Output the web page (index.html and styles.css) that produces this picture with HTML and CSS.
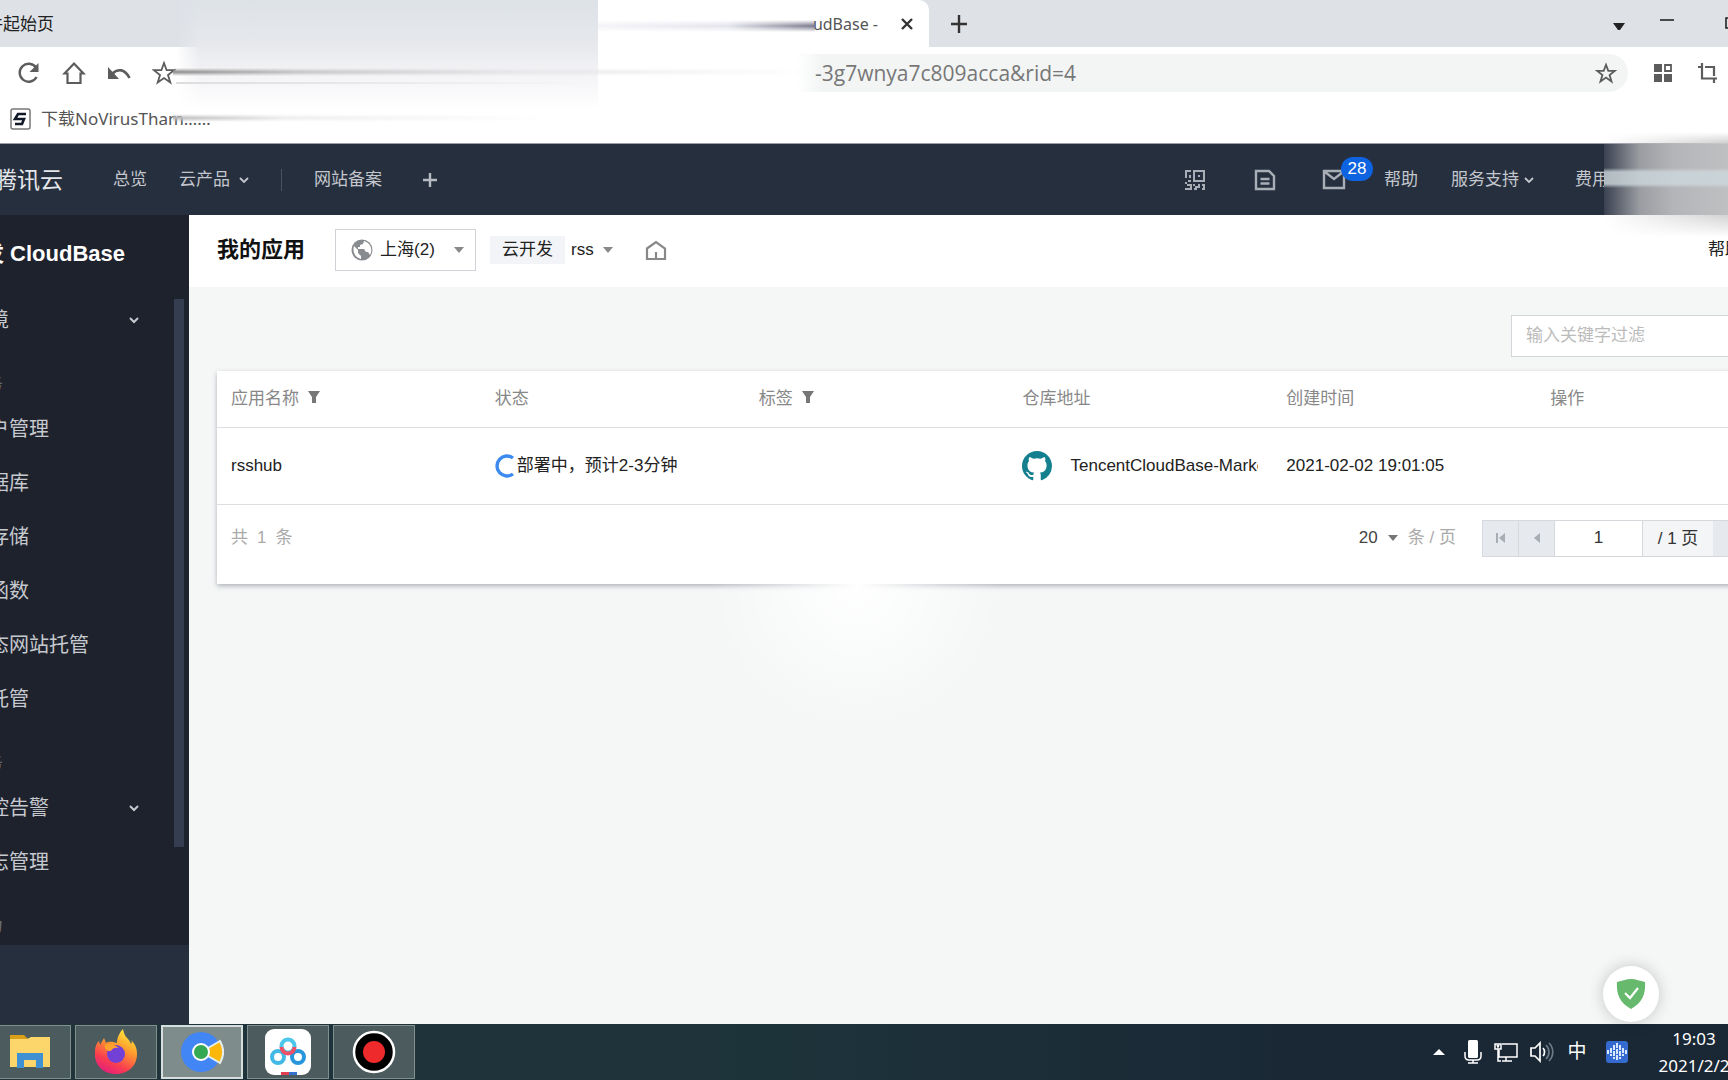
FILE: index.html
```html
<!DOCTYPE html>
<html lang="zh-CN">
<head>
<meta charset="utf-8">
<title>我的应用 - CloudBase</title>
<link rel="stylesheet" href="styles.css">
</head>
<body>
<div class="screen">
  <div class="tabstrip">
    <div class="tab">软件起始页</div>
    <div class="tab tab-active">
      <span>udBase -</span>
      <button class="plain" aria-label="关闭标签页"><svg width="16" height="16" viewBox="0 0 16 16"><path d="M3 3l10 10M13 3L3 13" stroke="#333" stroke-width="2.4"/></svg></button>
    </div>
    <button class="plain new-tab" aria-label="新标签页"><svg width="18" height="20" viewBox="0 0 18 20"><path d="M9 1v18M1 10h16" stroke="#333" stroke-width="2.4"/></svg></button>
    <div class="window-buttons">
      <button class="plain" aria-label="标签列表"><svg width="14" height="20" viewBox="0 0 14 20"><path d="M1 9h12l-5 7H6z" fill="#222"/></svg></button>
      <button class="plain" aria-label="最小化"><svg width="16" height="20" viewBox="0 0 16 20"><path d="M1 6h14" stroke="#222" stroke-width="1.6"/></svg></button>
      <button class="plain restore" aria-label="还原"><svg width="16" height="20" viewBox="0 0 16 20"><path d="M1 4h10v10H1zM4 4V1h10v10h-3" fill="none" stroke="#222" stroke-width="1.6"/></svg></button>
    </div>
  </div>

  <div class="toolbar">
    <div class="tool-icons">
      <button class="plain" aria-label="刷新"><svg width="24" height="24" viewBox="0 0 24 24"><path d="M19.6 16A9 9 0 1 1 19 6.500" fill="none" stroke="#5c5c5c" stroke-width="2.4"/><path d="M21.500 2v9h-9z" fill="#5c5c5c"/></svg></button>
      <button class="plain" aria-label="主页"><svg width="24" height="24" viewBox="0 0 24 24"><path d="M2.500 12.500L12 2.500l9.500 10H18.500v9.500h-13v-9.500z" fill="none" stroke="#5c5c5c" stroke-width="2.2"/></svg></button>
      <button class="plain" aria-label="撤销"><svg width="24" height="24" viewBox="0 0 24 24"><path d="M5 13C11 7 18 8 22.500 17" fill="none" stroke="#5c5c5c" stroke-width="2.6"/><path d="M1 6v12h11z" fill="#5c5c5c"/></svg></button>
      <button class="plain" aria-label="收藏夹"><svg width="24" height="24" viewBox="0 0 24 24"><path d="M12 2l2.600 7.200h7.400l-6 4.800 2.300 7.500L12 17l-6.300 4.500L8 14 2 9.200h7.400z" fill="none" stroke="#5c5c5c" stroke-width="1.800"/></svg></button>
    </div>
    <div class="omnibox">
      <input type="text" class="url" aria-label="地址" value="-3g7wnya7c809acca&amp;rid=4">
      <button class="plain" aria-label="加入收藏"><svg width="22" height="22" viewBox="0 0 24 24"><path d="M12 3l2.500 6.700h7l-5.600 4.500 2.100 7L12 17l-6 4.200 2.100-7-5.600-4.500h7z" fill="none" stroke="#5c5c5c" stroke-width="2"/></svg></button>
    </div>
    <div class="extensions">
      <button class="plain" aria-label="应用"><svg width="18" height="20" viewBox="0 0 18 20"><path d="M0 1h8v8H0zM0 11h8v8H0zM10 11h8v8h-8z" fill="#5c5c5c"/><path d="M11 2h6v6h-6z" fill="none" stroke="#5c5c5c" stroke-width="1.800"/></svg></button>
      <button class="plain" aria-label="截图"><svg width="20" height="20" viewBox="0 0 20 20"><path d="M0 4h3M4 0v15.500h15M7 4h9v9M16 16v4" fill="none" stroke="#5c5c5c" stroke-width="2.200"/></svg></button>
    </div>
  </div>

  <div class="bookmarks">
    <a href="#" class="bookmark"><svg width="21" height="22" viewBox="0 0 21 22"><rect x="1" y="1" width="19" height="20" rx="2" fill="#fff" stroke="#777" stroke-width="1.500"/><path d="M16 6H8L5 11h9l-2 5H5" fill="none" stroke="#111827" stroke-width="2.600"/></svg>下载NoVirusTham……</a>
  </div>

  <header class="cloud-bar">
    <a href="#" class="logo">腾讯云</a>
    <nav class="cloud-nav">
      <a href="#">总览</a>
      <a href="#" class="with-icon">云产品<svg width="10" height="8" viewBox="0 0 10 8"><path d="M1 2l4 4 4-4" fill="none" stroke="currentColor" stroke-width="1.800"/></svg></a>
      <span class="divider"></span>
      <a href="#">网站备案</a>
      <button class="plain" aria-label="添加"><svg width="16" height="16" viewBox="0 0 16 16"><path d="M8 1v14M1 8h14" stroke="#b7bcc4" stroke-width="2.400"/></svg></button>
    </nav>
    <div class="cloud-tools">
      <button class="plain" aria-label="二维码"><svg width="20" height="20" viewBox="0 0 20 20"><path d="M0 0h6v2H2v6H0zM8 0h12v12H8zM10 2v8h8V2zM13 5h2v2h-2zM4 5h2v3H4zM0 12h2v2H0zM3 10h3v2H3zM2 14h5v2H2zM0 18h5v-2h2v4H0zM8 14h2v2h3v-2h2v4h-3v2H9v-2h1v-2H8zM17 14h3v6h-3v-2h1v-2h-1z" fill="#a9aeb6" fill-rule="evenodd"/></svg></button>
      <button class="plain" aria-label="文档"><svg width="22" height="22" viewBox="0 0 22 22" fill="none" stroke="#a9aeb6" stroke-width="2.400"><path d="M2 2h13l5 5v13H2zM6.500 10h9M6.500 14.500h9"/></svg></button>
      <button class="plain mail" aria-label="消息"><svg width="24" height="22" viewBox="0 0 24 22" fill="none" stroke="#a9aeb6" stroke-width="2.400"><path d="M2 2h20v17H2zM3 3l9 7 9-7"/></svg><span class="badge">28</span></button>
      <a href="#">帮助</a>
      <a href="#" class="with-icon support">服务支持<svg width="10" height="8" viewBox="0 0 10 8"><path d="M1 2l4 4 4-4" fill="none" stroke="currentColor" stroke-width="1.800"/></svg></a>
      <a href="#">费用</a>
    </div>
  </header>

  <div class="workspace">
    <aside class="sidebar">
      <div class="side-title">云开发 CloudBase</div>
      <div class="side-scroll">
        <nav class="side-nav">
          <a href="#" class="side-item">环境<svg width="10" height="8" viewBox="0 0 10 8"><path d="M1 2l4 4 4-4" fill="none" stroke="currentColor" stroke-width="2"/></svg></a>
          <div class="side-group">基础服务</div>
          <a href="#" class="side-item">用户管理</a>
          <a href="#" class="side-item">数据库</a>
          <a href="#" class="side-item">云存储</a>
          <a href="#" class="side-item">云函数</a>
          <a href="#" class="side-item">静态网站托管</a>
          <a href="#" class="side-item">云托管</a>
          <div class="side-group">运维服务</div>
          <a href="#" class="side-item">监控告警<svg width="10" height="8" viewBox="0 0 10 8"><path d="M1 2l4 4 4-4" fill="none" stroke="currentColor" stroke-width="2"/></svg></a>
          <a href="#" class="side-item">日志管理</a>
          <div class="side-group">扩展能力</div>
        </nav>
        <div class="side-thumb"></div>
      </div>
      <div class="side-foot"></div>
    </aside>

    <main class="main">
      <div class="page-head">
        <h1>我的应用</h1>
        <label class="region">
          <svg width="22" height="22" viewBox="0 0 22 22"><circle cx="11" cy="11" r="10.500" fill="#888b8f"/><path d="M3 7l4 4v3l3 3v3C5 19 1 14 3 7zM13 2l-1 3-3 1v2H7v2h6l2 3h2l2 3c3-5 1-12-6-14z" fill="#fff"/></svg>
          <select aria-label="地域"><option>上海(2)</option></select>
          <svg class="caret" width="10" height="8" viewBox="0 0 10 8"><path d="M0 1h10L5 7z" fill="#888"/></svg>
        </label>
        <span class="tag">云开发</span>
        <label class="env">
          <select aria-label="环境"><option>rss</option></select>
          <svg class="caret" width="10" height="8" viewBox="0 0 10 8"><path d="M0 1h10L5 7z" fill="#888"/></svg>
        </label>
        <button class="plain home" aria-label="首页"><svg width="22" height="20" viewBox="0 0 22 20"><path d="M2 8.500L11 2l9 6.500V19H2zM11 19v-7" fill="none" stroke="#888" stroke-width="2.200"/></svg></button>
        <a href="#" class="docs">帮助文档</a>
      </div>

      <div class="content">
        <div class="filter"><input type="text" aria-label="输入关键字过滤" placeholder="输入关键字过滤"></div>
        <section class="card">
          <table>
            <thead>
              <tr>
                <th>应用名称<svg width="14" height="14" viewBox="0 0 14 14"><path d="M1 1h12L9 7v6H5V7z" fill="#777"/></svg></th>
                <th>状态</th>
                <th>标签<svg width="14" height="14" viewBox="0 0 14 14"><path d="M1 1h12L9 7v6H5V7z" fill="#777"/></svg></th>
                <th>仓库地址</th>
                <th>创建时间</th>
                <th>操作</th>
              </tr>
            </thead>
            <tbody>
              <tr>
                <td>rsshub</td>
                <td><span class="status"><svg width="22" height="24" viewBox="0 0 22 24"><path d="M18 4A10 10 0 1 0 18 20" fill="none" stroke="#3c8af0" stroke-width="3.400"/></svg>部署中，预计2-3分钟</span></td>
                <td></td>
                <td><a href="#" class="repo"><svg width="30" height="30" viewBox="0 0 16 16"><path fill="#14808f" d="M8 0C3.580 0 0 3.580 0 8c0 3.540 2.290 6.530 5.470 7.590.4.070.55-.17.55-.38 0-.19-.01-.82-.01-1.490-2.010.37-2.530-.49-2.690-.94-.09-.23-.48-.94-.82-1.130-.28-.15-.68-.52-.01-.53.63-.01 1.080.58 1.230.82.72 1.210 1.870.87 2.330.66.07-.52.28-.87.51-1.070-1.780-.2-3.640-.89-3.640-3.950 0-.87.31-1.590.82-2.150-.08-.2-.36-1.020.08-2.120 0 0 .67-.21 2.200.82.64-.18 1.320-.27 2-.27s1.360.09 2 .27c1.530-1.040 2.200-.82 2.200-.82.44 1.100.16 1.920.08 2.120.51.56.82 1.270.82 2.150 0 3.070-1.870 3.750-3.650 3.950.29.25.54.73.54 1.480 0 1.070-.01 1.930-.01 2.200 0 .21.15.46.55.38A8.010 8.010 0 0 0 16 8c0-4.420-3.580-8-8-8z"/></svg><span>TencentCloudBase-Marketplace</span></a></td>
                <td>2021-02-02 19:01:05</td>
                <td></td>
              </tr>
            </tbody>
          </table>
          <div class="pager">
            <span class="total"><span>共</span><span>1</span><span>条</span></span>
            <label class="per-page">
              <select aria-label="每页条数"><option>20</option></select>
              <svg class="caret" width="10" height="8" viewBox="0 0 10 8"><path d="M0 1h10L5 7z" fill="#777"/></svg>
              条 / 页
            </label>
            <div class="pages">
              <button aria-label="第一页"><svg width="10" height="12" viewBox="0 0 10 12"><path d="M1 1v10" stroke="#a8acb3" stroke-width="2"/><path d="M9 1v10L3 6z" fill="#a8acb3"/></svg></button>
              <button aria-label="上一页"><svg width="8" height="12" viewBox="0 0 8 12"><path d="M7 1v10L1 6z" fill="#a8acb3"/></svg></button>
              <input type="text" value="1" aria-label="页码">
              <span class="page-count">/ 1 页</span>
              <button aria-label="下一页"><svg width="8" height="12" viewBox="0 0 8 12"><path d="M1 1v10l6-5z" fill="#a8acb3"/></svg></button>
              <button aria-label="最后一页"><svg width="10" height="12" viewBox="0 0 10 12"><path d="M9 1v10" stroke="#a8acb3" stroke-width="2"/><path d="M1 1v10l6-5z" fill="#a8acb3"/></svg></button>
            </div>
          </div>
        </section>
      </div>
    </main>
  </div>

  <footer class="taskbar">
    <div class="tasks">
      <button class="task" aria-label="文件资源管理器"><svg width="42" height="38" viewBox="0 0 42 38"><path d="M1 2h14l4 4v6H1z" fill="#d9a017"/><path d="M1 6h17l4-2h19v30H1z" fill="#fcd66b"/><path d="M8 20h26v15h-7v-8H15v8H8z" fill="#3f91d3"/></svg></button>
      <button class="task" aria-label="Firefox"><svg width="44" height="46" viewBox="0 0 44 46"><defs><linearGradient id="fx" x1=".8" y1="0" x2=".3" y2="1"><stop offset="0" stop-color="#fff23c"/><stop offset=".4" stop-color="#ff9a2e"/><stop offset=".75" stop-color="#fa3d50"/><stop offset="1" stop-color="#e2207c"/></linearGradient></defs><path d="M22 45C8 45 0 35 1 23c0-6 2-9 4-11l1 4 4-7 2 5c4-2 6-1 11 0C23 8 26 3 29 0c1 6 3 8 6 11l2 4c1-1 1-3 0-4 5 5 6 9 6 14 0 12-9 20-21 20z" fill="url(#fx)"/><circle cx="22" cy="25" r="9" fill="#7340d6"/><path d="M11 16c4-2 9-1 14 3-5-1-7 1-8 3-4 0-7-2-6-6z" fill="#ffa12c"/></svg></button>
      <button class="task task-active" aria-label="浏览器"><svg width="44" height="44" viewBox="0 0 44 44"><circle cx="21" cy="22" r="20" fill="#4285f4"/><path d="M21 22L40 11c4 7 4 15 0 22z" fill="#fbb80b" stroke="#e4eef0" stroke-width="2"/><circle cx="21" cy="22" r="8" fill="#34a853" stroke="#fff" stroke-width="2"/></svg></button>
      <button class="task" aria-label="百度网盘"><svg width="46" height="48" viewBox="0 0 46 48"><rect width="46" height="46" y="1" rx="9" fill="#fff"/><g fill="none" stroke-width="4"><circle cx="13" cy="29" r="6" stroke="#43b9e6"/><circle cx="33" cy="29" r="6" stroke="#2796dd"/><circle cx="23" cy="18" r="6.500" stroke="#4cc6ea"/><path d="M16.500 19a6.500 6.500 0 0 0 13 0" stroke="#ee5166"/></g><path d="M16 44h8v3h-8z" fill="#e04050"/><path d="M24 44h8v3h-8z" fill="#3572cc"/></svg></button>
      <button class="task" aria-label="录屏"><svg width="44" height="44" viewBox="0 0 44 44"><circle cx="22" cy="22" r="20" fill="#000" stroke="#fff" stroke-width="2.500"/><circle cx="22" cy="22" r="11" fill="#ee2a2c"/></svg></button>
    </div>
    <div class="tray">
      <svg width="12" height="8" viewBox="0 0 12 8"><path d="M0 7l6-6 6 6z" fill="#fff"/></svg>
      <svg width="18" height="24" viewBox="0 0 18 24"><rect x="4" y="0" width="10" height="18" rx="1.500" fill="#fff"/><path d="M1 12v4c0 3 2 4 4 4h8c2 0 4-1 4-4v-4M9 20v3M4 23h10" fill="none" stroke="#fff" stroke-width="1.500"/></svg>
      <svg width="24" height="22" viewBox="0 0 24 22" fill="none" stroke="#fff" stroke-width="1.500"><path d="M8 3h15v13H5V9M12 16v4M8 20h10M1 3h6v5H1zM4 8v12h3M3 4l1 2 1-2"/></svg>
      <svg width="24" height="22" viewBox="0 0 24 22" fill="none" stroke-width="1.700"><path d="M1 7h4l5-5v18l-5-5H1zM13 7c2 2 2 6 0 8" stroke="#fff"/><path d="M16 4c4 4 4 10 0 14M19 2c5 5 5 13 0 18" stroke="#6d7984"/></svg>
      <span class="ime">中</span>
      <svg class="voice" width="22" height="22" viewBox="0 0 22 22"><rect width="22" height="22" rx="3" fill="#356bd0"/><path d="M2 9v4M5 7v8M8 4v14M11 2v18M14 4v14M17 7v8M20 9v4" stroke="#d8e8ff" stroke-width="2" stroke-dasharray="5 1"/></svg>
      <time class="clock">19:03<br>2021/2/2</time>
    </div>
  </footer>
</div>

<div class="smear smear-tabs"></div>
<div class="smear smear-title"></div>
<div class="smear smear-url"></div>
<div class="smear smear-star"></div>
<div class="smear smear-mark"></div>
<div class="smear smear-account"></div>
<div class="smear smear-card"></div>
<button class="plain shield" aria-label="安全防护"><svg width="30" height="32" viewBox="0 0 30 32"><path d="M1 4c5-1 9-3 14-3s9 2 14 3c1 12-3 21-14 27C4 25 0 16 1 4z" fill="#67b96d"/><path d="M9 15l5 5 8-10" fill="none" stroke="#fff" stroke-width="2.200"/></svg></button>
</body>
</html>
```

FILE: styles.css
```css
* { box-sizing: border-box; }

body {
  margin: 0;
  overflow: hidden;
  font: 17px/24px "Liberation Sans", "Noto Sans CJK SC", sans-serif;
  color: #222;
  background: #fff;
}

a { color: inherit; text-decoration: none; }
svg { display: block; flex: none; }
button, input, select { font: inherit; color: inherit; }

select {
  appearance: none;
  border: 0;
  padding: 0;
  background: transparent;
}

.plain {
  display: block;
  border: 0;
  padding: 0;
  background: none;
}

/* The recorded desktop is wider than the viewport on both sides. */
.screen {
  display: flex;
  flex-direction: column;
  height: 100vh;
  margin: 0 -100px 0 -80px;
}

/* Browser chrome */
.tabstrip {
  display: flex;
  align-items: center;
  height: 47px;
  background: #dee1e6;
  font: 16px/24px "Noto Sans", "Noto Sans CJK SC", sans-serif;
}
.tab { width: 678px; padding-left: 49px; font-size: 17px; }
.tab-active {
  display: flex;
  align-items: center;
  justify-content: flex-end;
  gap: 21px;
  align-self: stretch;
  width: 331px;
  padding: 0 14px 0 0;
  border-radius: 0 10px 0 0;
  background: #fff;
  font-size: 16px;
  color: #555;
}
.new-tab { margin-left: 21px; }
.window-buttons { display: flex; gap: 33px; margin-left: auto; padding-right: 87px; }
.restore { margin-left: 17px; }

.toolbar {
  display: flex;
  align-items: center;
  height: 52px;
  padding: 0 97px;
}
.tool-icons { display: flex; gap: 21px; width: 780px; }
.omnibox {
  display: flex;
  align-items: center;
  flex: 1;
  height: 38px;
  padding: 0 11px 0 18px;
  border-radius: 0 19px 19px 0;
  background: linear-gradient(90deg, #fff, #f3f5f5 24px);
}
.url {
  flex: 1;
  border: 0;
  padding: 0;
  background: transparent;
  font: 21px/28px "Open Sans", sans-serif;
  color: #777;
}
.extensions { display: flex; gap: 26px; width: 87px; margin: 0 -10px 0 26px; }

.bookmarks {
  display: flex;
  align-items: center;
  height: 45px;
  padding: 0 0 4px 90px;
  border-bottom: 1px solid #9a9fa6;
}
.bookmark {
  display: flex;
  align-items: center;
  gap: 10px;
  font-family: "Noto Sans", "Noto Sans CJK SC", sans-serif;
  color: #555;
}

/* Cloud console bar */
.cloud-bar {
  display: flex;
  align-items: center;
  height: 71px;
  padding-left: 74px;
  background: #262f3e;
  color: #c3c7cd;
}
.logo { font-size: 23px; line-height: 32px; color: #e3e6ea; }
.cloud-nav { display: flex; align-items: center; gap: 32px; margin-left: 50px; }
.with-icon { display: flex; align-items: center; gap: 9px; }
.divider { width: 1px; height: 22px; background: #4a5260; }
.cloud-nav button { margin-left: 8px; }
.cloud-tools {
  display: flex;
  align-items: center;
  margin-left: auto;
  padding-right: 219px;
}
.cloud-tools button { margin-right: 46px; }
.cloud-tools button:first-child { margin-right: 49px; }
.cloud-tools .mail { position: relative; margin-right: 38px; }
.badge {
  position: absolute;
  left: 19px;
  top: -12px;
  width: 32px;
  height: 24px;
  border-radius: 12px;
  background: #0d63e0;
  color: #fff;
}
.support { gap: 5px; margin: 0 41px 0 33px; }

/* Sidebar */
.workspace { display: flex; flex: 1; min-height: 0; }
.sidebar {
  display: flex;
  flex-direction: column;
  flex: none;
  width: 269px;
  background: #1e222d;
  color: #c6c9ce;
}
.side-title {
  height: 78px;
  padding-left: 18px;
  font-size: 22px;
  font-weight: 700;
  line-height: 78px;
  color: #fff;
}
.side-scroll { display: flex; flex: 1; min-height: 0; }
.side-nav { flex: 1; overflow: hidden; }
.side-item {
  display: flex;
  align-items: center;
  justify-content: space-between;
  height: 54px;
  padding: 0 35px 0 49px;
  font-size: 20px;
}
.side-group {
  height: 55px;
  padding: 20px 0 0 15px;
  line-height: 36px;
  color: #6b7078;
}
.side-thumb { width: 10px; height: 84%; margin: 6px 5px 0 0; background: #343e50; }
.side-foot { height: 79px; background: #262f3e; }

/* Page */
.main { flex: 1; min-width: 0; background: #f5f7f7; }
.page-head {
  display: flex;
  align-items: center;
  height: 72px;
  padding: 0 52px 2px 28px;
  background: #fff;
}
h1 { margin: 0 30px 0 0; font-size: 22px; line-height: 32px; color: #111; }
.region {
  display: flex;
  align-items: center;
  width: 141px;
  height: 42px;
  padding: 0 11px 0 15px;
  border: 1px solid #cfd2d6;
}
.region select { margin-left: 7px; }
.region .caret { margin-left: auto; }
.tag { margin: 0 6px 0 14px; padding: 2px 12px; background: #f3f4f7; }
.env { display: flex; align-items: center; gap: 9px; }
.home { margin-left: 32px; }
.docs { margin-left: auto; }

.content { padding: 28px; }
.filter { display: flex; justify-content: flex-end; margin-bottom: 14px; }
.filter input {
  width: 289px;
  height: 42px;
  padding: 0 14px;
  border: 1px solid #d2d5d9;
  background: #fff;
}
.filter input::placeholder { color: #bbb; }

.card { background: #fff; box-shadow: 0 2px 5px rgba(40, 45, 70, .35); }
table { width: 100%; border-collapse: collapse; table-layout: fixed; }
th, td {
  height: 77px;
  padding: 0 14px;
  border-bottom: 1px solid #dcdfe2;
  text-align: left;
  font-weight: 400;
}
th { height: 56px; color: #888; }
th svg { display: inline-block; margin-left: 8px; }
.status, .repo { display: flex; align-items: center; }
.repo { gap: 18px; overflow: hidden; white-space: nowrap; }

.pager { display: flex; align-items: center; height: 79px; padding: 0 14px 12px; color: #aaa; }
.total { display: flex; gap: 9px; margin-right: auto; }
.per-page { display: flex; align-items: center; gap: 10px; margin-right: 26px; }
.per-page select { color: #444; }
.pages {
  display: flex;
  height: 37px;
  border: 1px solid #d5d8dd;
  background: #f4f5f6;
  color: #333;
}
.pages button {
  display: grid;
  place-items: center;
  width: 36px;
  border: 0;
  border-right: 1px solid #d5d8dd;
  padding: 0;
  background: #e6e9ee;
}
.pages input {
  width: 88px;
  border: 0;
  border-right: 1px solid #d5d8dd;
  padding: 0;
  background: #fff;
  text-align: center;
}
.page-count { width: 70px; text-align: center; line-height: 35px; }

/* Taskbar */
.taskbar {
  display: flex;
  align-items: center;
  justify-content: space-between;
  height: 56px;
  padding-left: 69px;
  background: linear-gradient(90deg, #20343a, #1d333a 45%, #1a2735 75%);
}
.tasks { display: flex; gap: 4px; }
.task {
  display: grid;
  place-items: center;
  width: 82px;
  height: 54px;
  border: 1px solid #81908f;
  padding: 0;
  background: #4b5b5e;
}
.task-active { border: 2px solid #d5dddd; background: #7f8c8c; }
.tray { display: flex; align-items: center; gap: 12px; padding-right: 91px; color: #fff; }
.tray svg:first-child { margin-right: 7px; }
.ime { width: 22px; font-size: 19px; text-align: center; }
.voice { margin: 0 11px 0 6px; }
.clock {
  width: 86px;
  font: 17px/27px "Noto Sans", sans-serif;
  text-align: center;
}

/* Privacy smears over the recording */
.smear { position: absolute; pointer-events: none; }
.smear-tabs {
  left: 176px;
  top: 0;
  width: 422px;
  height: 110px;
  background: linear-gradient(#dde2e6, #e6e8ec 40%, #f3f3f6 66%, #fff);
  mask-image: linear-gradient(90deg, transparent, #000 24px);
}
.smear-title {
  left: 598px;
  top: 20px;
  width: 217px;
  height: 12px;
  background: linear-gradient(90deg, #f4f4f8, #e3e3ec 60%, #77778a);
  mask-image: linear-gradient(transparent, #000 50%, transparent);
}
.smear-url {
  left: 176px;
  top: 82px;
  width: 420px;
  height: 2px;
  background: linear-gradient(90deg, #dcdddf, transparent);
}
.smear-star {
  left: 173px;
  top: 68px;
  width: 640px;
  height: 8px;
  background: linear-gradient(90deg, #8a8a8a, #c4c4c6 20%, #e7e7ea 55%, transparent);
  mask-image: linear-gradient(transparent, #000 50%, transparent);
}
.smear-mark {
  left: 173px;
  top: 114px;
  width: 380px;
  height: 8px;
  background: linear-gradient(90deg, #bbb, #eee 30%, transparent);
  mask-image: linear-gradient(transparent, #000 50%, transparent);
}
.smear-account {
  left: 1604px;
  right: 0;
  top: 144px;
  height: 71px;
  background:
    linear-gradient(transparent 24px, rgba(205, 216, 220, .8) 28px, rgba(205, 216, 220, .8) 40px, transparent 44px),
    linear-gradient(90deg, #3a4150, #9b9da2 36px, #b4b5b8 70px, #bfc0c2);
}
.smear-account::before,
.smear-account::after {
  content: "";
  position: absolute;
  left: 0;
  right: 0;
  mask-image: linear-gradient(90deg, transparent, #000);
}
.smear-account::before {
  bottom: 100%;
  height: 12px;
  background: linear-gradient(transparent, #ccc);
}
.smear-account::after {
  top: 100%;
  height: 22px;
  background: linear-gradient(#d2d2d3, transparent);
}
.smear-card {
  left: 712px;
  top: 583px;
  width: 290px;
  height: 145px;
  background: radial-gradient(ellipse 50% 100% at 50% 0, #fff, rgba(255, 255, 255, .4) 55%, transparent);
}
.shield {
  position: absolute;
  right: 69px;
  bottom: 58px;
  display: grid;
  place-items: center;
  width: 56px;
  height: 56px;
  border-radius: 50%;
  background: #fff;
  box-shadow: 0 0 16px rgba(0, 0, 0, .2);
}
```
